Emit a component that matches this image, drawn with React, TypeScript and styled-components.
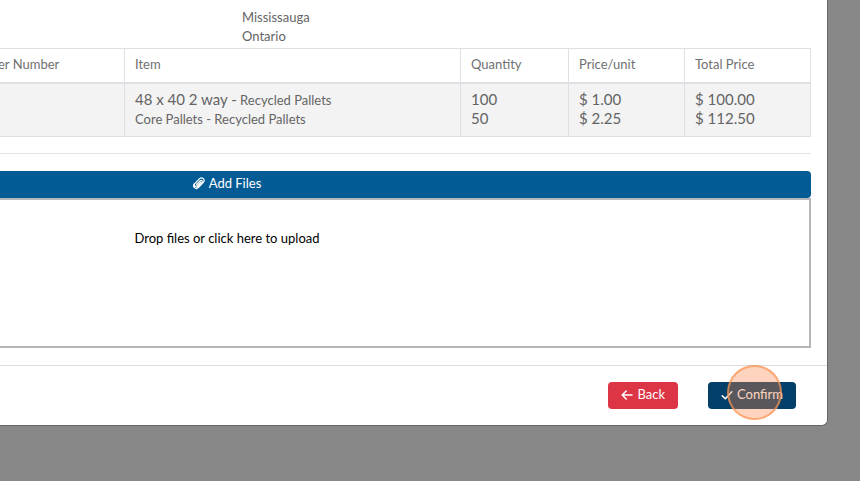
import React from "react";
import styled, { createGlobalStyle } from "styled-components";

const GlobalStyle = createGlobalStyle`
  * { box-sizing: border-box; }
  body {
    margin: 0;
    background: #888888;
    color: #646464;
    font: 13px/19px Lato, "Open Sans", sans-serif;
    overflow: hidden;
  }
`;

/* The dialog is wider than the window and is scrolled to its right-hand end. */
const Dialog = styled.main`
  margin: 0 32px 0 -374px;
  background: #ffffff;
  border: 1px solid #666666;
  border-top: 0;
  border-radius: 0 0 6px 6px;
`;

const Body = styled.div`
  padding: 8px 16px 17px;
`;

const Address = styled.address`
  margin: 0 0 2px 599px;
  font-style: normal;
`;

const Table = styled.table`
  width: 100%;
  table-layout: fixed;
  border-collapse: collapse;
  border: 1px solid #dee0e4;
`;

const Column = styled.col<{ $width?: number }>`
  width: ${(p) => (p.$width ? `${p.$width}px` : "auto")};
`;

const HeadCell = styled.th`
  padding: 6px 10px 8px;
  border: 1px solid #dee0e4;
  border-bottom-width: 2px;
  color: #707070;
  font-weight: 400;
  text-align: left;
`;

const Cell = styled.td`
  padding: 6px 10px 8px;
  border: 1px solid #dee0e4;
  background: #f3f3f3;
  vertical-align: top;
`;

const Figures = styled.span`
  font-size: 15px;
`;

const Line = styled.div`
  height: 19px;
  white-space: nowrap;
`;

const Divider = styled.hr`
  margin: 16px 0 17px;
  border: 0;
  border-top: 1px solid #e4e4e4;
`;

const Button = styled.button<{ $tone: string }>`
  display: inline-flex;
  align-items: center;
  justify-content: center;
  gap: 4px;
  height: 27px;
  padding: 0 13px 2px;
  border: 0;
  border-radius: 4px;
  background: ${(p) => p.$tone};
  color: #ffffff;
  font: inherit;
  cursor: pointer;
`;

const AddButton = styled(Button)`
  display: flex;
  width: 100%;
`;

const DropZone = styled.button`
  display: flex;
  align-items: flex-start;
  justify-content: center;
  width: 100%;
  height: 150px;
  padding: 29px 16px;
  border: 2px solid #b6b6b6;
  background: #ffffff;
  color: #000000;
  font: inherit;
  cursor: pointer;
`;

const Footer = styled.footer`
  display: flex;
  justify-content: flex-end;
  gap: 30px;
  padding: 16px 31px 16px;
  border-top: 1px solid #dedede;
`;

const Target = styled.div`
  position: relative;
  display: flex;
`;

const ClickMark = styled.span`
  position: absolute;
  top: -17px;
  left: 19px;
  width: 55px;
  height: 55px;
  border: 2px solid rgba(250, 150, 85, 0.7);
  border-radius: 50%;
  background: rgba(255, 133, 68, 0.35);
  pointer-events: none;
`;

const ClipIcon = () => (
  <svg width="12" height="13" viewBox="0 0 12 13" fill="none" stroke="currentColor" strokeWidth="1.2" strokeLinecap="round" aria-hidden="true">
    <path d="M3.800 7.200 7.200 3.800C8.500 2.600 10 4 8.800 5.300L5 9.200C3 11 .2 8.500 2 6.300L6.600 1.600C9.200-.6 12.600 2.700 10.400 5.300L5.600 10.400C2.800 13.200-1 9.600 1.400 6.600" />
    <path d="M3.800 7.200C3.200 8 4 8.700 4.700 8.100L7.600 5.200" />
  </svg>
);

const BackIcon = () => (
  <svg width="12" height="12" viewBox="0 0 12 12" fill="none" stroke="currentColor" strokeWidth="1.6" strokeLinecap="round" strokeLinejoin="round" aria-hidden="true">
    <path d="M11 6H1.200M5.200 2 1.200 6l4 4" />
  </svg>
);

const CheckIcon = () => (
  <svg width="12" height="12" viewBox="0 0 12 12" fill="none" stroke="currentColor" strokeWidth="1.6" strokeLinecap="round" strokeLinejoin="round" aria-hidden="true">
    <path d="M1.200 6.800 4.300 9.800 10.800 2.800" />
  </svg>
);

const items = [
  { size: "48 x 40 2 way -", name: " Recycled Pallets", quantity: "100", price: "$ 1.00", total: "$ 100.00" },
  { size: "", name: "Core Pallets - Recycled Pallets", quantity: "50", price: "$ 2.25", total: "$ 112.50" },
];

export default function App() {
  return (
    <>
      <GlobalStyle />
      <Dialog>
        <Body>
          <Address>
            <div>Mississauga</div>
            <div>Ontario</div>
          </Address>
          <Table>
            <colgroup>
              <Column $width={344} />
              <Column $width={137} />
              <Column />
              <Column $width={108} />
              <Column $width={116} />
              <Column $width={126} />
            </colgroup>
            <thead>
              <tr>
                <HeadCell />
                <HeadCell>er Number</HeadCell>
                <HeadCell>Item</HeadCell>
                <HeadCell>Quantity</HeadCell>
                <HeadCell>Price/unit</HeadCell>
                <HeadCell>Total Price</HeadCell>
              </tr>
            </thead>
            <tbody>
              <tr>
                <Cell />
                <Cell />
                <Cell>
                  {items.map((item) => (
                    <Line key={item.name}>
                      <Figures>{item.size}</Figures>
                      {item.name}
                    </Line>
                  ))}
                </Cell>
                {(["quantity", "price", "total"] as const).map((field) => (
                  <Cell key={field}>
                    {items.map((item) => (
                      <Line key={item.name}>
                        <Figures>{item[field]}</Figures>
                      </Line>
                    ))}
                  </Cell>
                ))}
              </tr>
            </tbody>
          </Table>
          <Divider />
          <AddButton type="button" $tone="#035b96">
            <ClipIcon />
            Add Files
          </AddButton>
          <DropZone type="button">Drop files or click here to upload</DropZone>
        </Body>
        <Footer>
          <Button type="button" $tone="#dc3545">
            <BackIcon />
            Back
          </Button>
          <Target>
            <Button type="button" $tone="#024069">
              <CheckIcon />
              Confirm
            </Button>
            <ClickMark />
          </Target>
        </Footer>
      </Dialog>
    </>
  );
}
